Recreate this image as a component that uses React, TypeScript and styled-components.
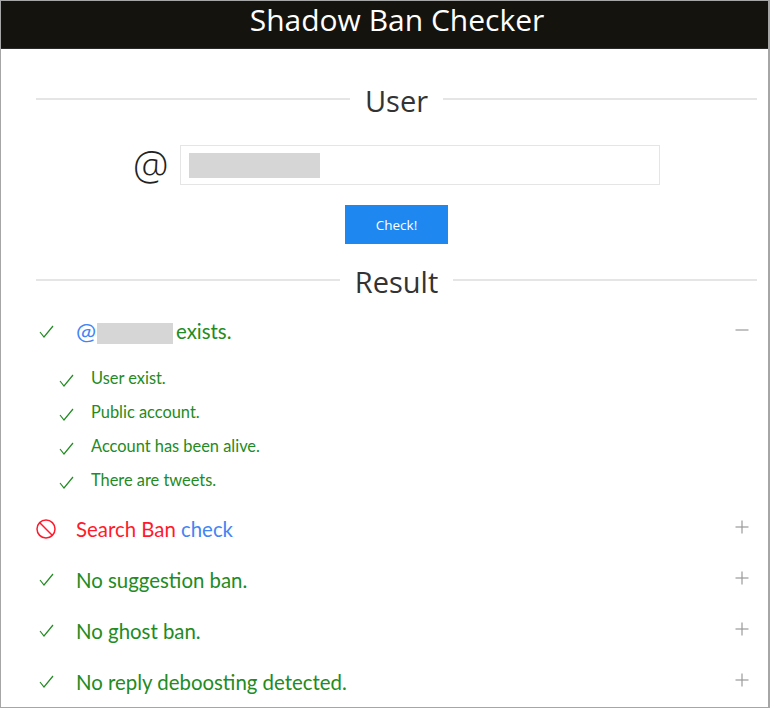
import React from "react";
import styled, {createGlobalStyle} from "styled-components";

const GlobalStyle = createGlobalStyle`
  html, body {
    margin: 0;
    padding: 0;
    background: #fff;
  }
`

const CheckIcon = () => (
    <svg width="20" height="20" viewBox="0 0 20 20" fill="none" stroke="#228b22" strokeWidth="1.2">
        <polyline points="4,10 8,15 17,4"/>
    </svg>
)

const BanIcon = () => (
    <svg width="20" height="20" viewBox="0 0 20 20" fill="none" stroke="#ff1a2b" strokeWidth="1.5">
        <circle cx="10" cy="10" r="9"/>
        <line x1="3.8" y1="3.8" x2="16.2" y2="16.2"/>
    </svg>
)

const ToggleIcon = ({open}: {open: boolean}) => (
    <ToggleSvg width="14" height="14" viewBox="0 0 14 14" stroke="#999" strokeWidth="1.2">
        <line x1="0.5" y1="7" x2="13.5" y2="7"/>
        {!open && <line x1="7" y1="0.5" x2="7" y2="13.5"/>}
    </ToggleSvg>
)

const subChecks = ["User exist.", "Public account.", "Account has been alive.", "There are tweets."]
const passedChecks = ["No suggestion ban.", "No ghost ban.", "No reply deboosting detected."]

export default function App() {
    return (
        <Frame>
            <GlobalStyle/>
            <Header>Shadow Ban Checker</Header>
            <Content>
                <SectionTitle><span>User</span></SectionTitle>
                <UserRow>
                    <AtSign>@</AtSign>
                    <UserBox>
                        <Redacted/>
                    </UserBox>
                </UserRow>
                <CheckButton>Check!</CheckButton>
                <ResultTitle><span>Result</span></ResultTitle>
                <FirstRow $ok>
                    <IconCell><CheckIcon/></IconCell>
                    <RowText>
                        <AtLink>@</AtLink>
                        <InlineRedacted/>
                        exists.
                    </RowText>
                    <ToggleIcon open/>
                </FirstRow>
                <SubList>
                    {subChecks.map((check) => (
                        <SubRow key={check}>
                            <SubIcon><CheckIcon/></SubIcon>
                            <SubText>{check}</SubText>
                        </SubRow>
                    ))}
                </SubList>
                <ResultRow>
                    <IconCell><BanIcon/></IconCell>
                    <RowText>
                        Search Ban <UserLink>check</UserLink>
                    </RowText>
                    <ToggleIcon open={false}/>
                </ResultRow>
                {passedChecks.map((check) => (
                    <ResultRow $ok key={check}>
                        <IconCell><CheckIcon/></IconCell>
                        <RowText>{check}</RowText>
                        <ToggleIcon open={false}/>
                    </ResultRow>
                ))}
            </Content>
        </Frame>
    )
}

const Frame = styled.div`
  width: 770px;
  height: 708px;
  box-sizing: border-box;
  border: 1px solid #a6a6a6;
  border-right-width: 2px;
  overflow: hidden;
  background: #fff;
  font-family: "Open Sans", "Liberation Sans", sans-serif;
`

const Header = styled.header`
  height: 48px;
  box-sizing: border-box;
  padding-left: 25px;
  background: #15130e;
  color: #fff;
  font-size: 30px;
  line-height: 37px;
  text-align: center;
  border-bottom: 1px solid #2a2a2a;
`

const Content = styled.main`
  padding: 0 11px 0 35px;
`

const SectionTitle = styled.h2`
  display: flex;
  align-items: center;
  gap: 15px;
  margin: 29px 0 0;
  height: 42px;
  font-size: 29px;
  font-weight: 400;
  color: #333;

  span {
    padding-top: 2px;
  }

  &::before, &::after {
    content: "";
    flex: 1;
    height: 2px;
    background: #e5e5e5;
  }
`

const ResultTitle = styled(SectionTitle)`
  margin: 15px 0 0;
`

const UserRow = styled.div`
  display: flex;
  align-items: center;
  gap: 12px;
  margin: 25px 0 0 97px;
`

const AtSign = styled.span`
  font-size: 40px;
  line-height: 40px;
  font-weight: 300;
  color: #222;
`

const UserBox = styled.div`
  box-sizing: border-box;
  display: flex;
  align-items: center;
  width: 480px;
  height: 40px;
  padding: 0 8px;
  border: 1px solid #e5e5e5;
`

const Redacted = styled.div`
  width: 131px;
  height: 25px;
  background: #d6d6d6;
`

const InlineRedacted = styled.span`
  display: inline-block;
  vertical-align: -5px;
  width: 76px;
  height: 21px;
  margin-right: 3px;
  background: #d6d6d6;
`

const CheckButton = styled.button`
  display: block;
  width: 103px;
  height: 39px;
  margin: 20px 0 0 309px;
  border: none;
  padding: 0;
  background: #1e87f0;
  color: #fff;
  font-family: "Open Sans", sans-serif;
  font-size: 13.5px;
`

const ResultRow = styled.div<{$ok?: boolean}>`
  display: flex;
  align-items: center;
  height: 51px;
  padding-right: 8px;
  color: ${(p) => (p.$ok ? "#228b22" : "#ff1a2b")};
`

const FirstRow = styled(ResultRow)`
  margin-top: 5px;
`

const IconCell = styled.span`
  display: flex;
  width: 40px;
  flex: none;
`

const RowText = styled.span`
  flex: 1;
  font-family: Lato, sans-serif;
  font-size: 20.4px;
`

const ToggleSvg = styled.svg`
  margin-top: -4px;
`

const UserLink = styled.span`
  color: #4285f4;
`

const AtLink = styled(UserLink)`
  display: inline-block;
  width: 21px;
  font-size: 24px;
  line-height: 1;
  vertical-align: -1px;
`

const SubList = styled.div`
  display: flex;
  flex-direction: column;
  margin-top: 3px;
  margin-bottom: 7px;
`

const SubRow = styled.div`
  display: flex;
  align-items: center;
  height: 34px;
  padding-left: 20px;
  color: #228b22;
`

const SubIcon = styled.span`
  display: flex;
  width: 35px;
  flex: none;
  margin-top: 7px;
`

const SubText = styled.span`
  font-family: Lato, sans-serif;
  font-size: 16.4px;
`
